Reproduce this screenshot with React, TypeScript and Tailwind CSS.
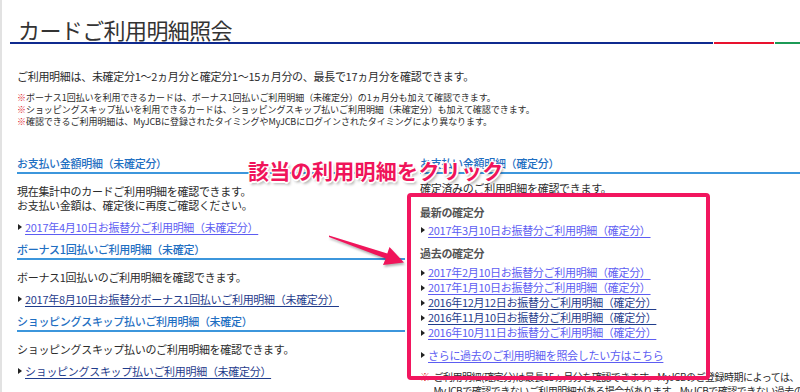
import React from 'react';

type Lnk = { text: string; dark?: boolean };

const notes = [
  'ボーナス1回払いを利用できるカードは、ボーナス1回払いご利用明細（未確定分）の1ヵ月分も加えて確認できます。',
  'ショッピングスキップ払いを利用できるカードは、ショッピングスキップ払いご利用明細（未確定分）も加えて確認できます。',
  '確認できるご利用明細は、MyJCBに登録されたタイミングやMyJCBにログインされたタイミングにより異なります。',
];

const pastLinks: Lnk[] = [
  { text: '2017年2月10日お振替分ご利用明細（確定分）' },
  { text: '2017年1月10日お振替分ご利用明細（確定分）' },
  { text: '2016年12月12日お振替分ご利用明細（確定分）', dark: true },
  { text: '2016年11月10日お振替分ご利用明細（確定分）', dark: true },
  { text: '2016年10月11日お振替分ご利用明細（確定分）' },
];

function Arrowed({ text, dark, lh = 'leading-[16px]' }: Lnk & { lh?: string }) {
  return (
    <div className={`flex items-center ${lh}`}>
      <span className="mr-[3px] ml-[1px] inline-block h-0 w-0 border-y-[3px] border-l-[4px] border-y-transparent border-l-[#222]" />
      <a
        href="#"
        className={`underline underline-offset-[2px] ${dark ? 'text-[#1f3c8c]' : 'text-[#5d5df2]'}`}
      >
        {text}
      </a>
    </div>
  );
}

function Heading({ children }: { children: React.ReactNode }) {
  return (
    <>
      <h2 className="leading-[16px] font-medium text-[#1f6fc2]">{children}</h2>
      <div className="mt-[1px] h-[2px] bg-[#3c96dc]" />
    </>
  );
}

function Section({ title, lines, link }: { title: string; lines: string[]; link: Lnk }) {
  return (
    <section>
      <Heading>{title}</Heading>
      <div className="mt-[10px] leading-[14px]">
        {lines.map((l) => (
          <p key={l}>{l}</p>
        ))}
      </div>
      <div className="mt-[7px]">
        <Arrowed {...link} />
      </div>
    </section>
  );
}

export default function App() {
  return (
    <div className="relative h-[392px] w-[800px] overflow-hidden border-l-2 border-[#e2e2e2] bg-white font-['Noto_Sans_CJK_JP',sans-serif] text-[11px] tracking-[-0.3px] text-[#2b2b2b]">
      <h1 className="pt-[16px] pl-[16px] text-[22px] leading-[26px] tracking-[-0.6px] text-[#333]">カードご利用明細照会</h1>
      <div className="ml-[8px] flex h-[2px] gap-[1px]">
        <div className="w-[703px] bg-[#0f2a8f]" />
        <div className="w-[60px] bg-[#e8122e]" />
        <div className="flex-1 bg-[#1c9a56]" />
      </div>

      <div className="pl-[15px]">
        <p className="mt-[24px] leading-[16px]">
          ご利用明細は、未確定分1～2ヵ月分と確定分1～15ヵ月分の、最長で17ヵ月分を確認できます。
        </p>
        <ul className="mt-[8px] text-[9px] leading-[12px] tracking-[-0.05px]">
          {notes.map((n) => (
            <li key={n}>
              <span className="text-[#e0262b]">※</span>
              {n}
            </li>
          ))}
        </ul>

        <div className="mt-[27px] flex">
          <div className="flex w-[388px] shrink-0 flex-col gap-[6px]">
            <Section
              title="お支払い金額明細（未確定分）"
              lines={['現在集計中のカードご利用明細を確認できます。', 'お支払い金額は、確定後に再度ご確認ください。']}
              link={{ text: '2017年4月10日お振替分ご利用明細（未確定分）' }}
            />
            <Section
              title="ボーナス1回払いご利用明細（未確定）"
              lines={['ボーナス1回払いのご利用明細を確認できます。']}
              link={{ text: '2017年8月10日お振替分ボーナス1回払いご利用明細（未確定分）', dark: true }}
            />
            <Section
              title="ショッピングスキップ払いご利用明細（未確定）"
              lines={['ショッピングスキップ払いのご利用明細を確認できます。']}
              link={{ text: 'ショッピングスキップ払いご利用明細（未確定分）', dark: true }}
            />
          </div>

          <div className="ml-[15px] w-[420px] shrink-0">
            <Heading>お支払い金額明細（確定分）</Heading>
            <p className="mt-[7px] leading-[14px]">確定済みのご利用明細を確認できます。</p>
            <h3 className="mt-[9px] font-bold leading-[16px] text-[#555]">最新の確定分</h3>
            <div className="mt-[2px]">
              <Arrowed text="2017年3月10日お振替分ご利用明細（確定分）" />
            </div>
            <h3 className="mt-[7px] font-bold leading-[16px] text-[#555]">過去の確定分</h3>
            <div className="mt-[4px]">
              {pastLinks.map((l) => (
                <Arrowed key={l.text} {...l} lh="leading-[15px]" />
              ))}
            </div>
            <div className="mt-[7px]">
              <Arrowed text="さらに過去のご利用明細を照会したい方はこちら" />
            </div>
            <div className="mt-[7px] flex text-[10px] leading-[14px] tracking-[-0.5px]">
              <span className="mr-[4px] text-[#e0262b]">※</span>
              <p className="whitespace-nowrap">
                ご利用明細(確定分)は最長15ヵ月分を確認できます。MyJCBのご登録時期によっては、
                <br />
                MyJCBで確認できないご利用明細がある場合があります。MyJCBで確認できない過去のご利用明細は
              </p>
            </div>
          </div>
        </div>
      </div>

      {/* annotation overlay */}
      <div className="pointer-events-none absolute top-[193px] left-[405px] h-[187px] w-[303px] rounded-[4px] border-4 border-[#f2165f]" />
      <p className="pointer-events-none absolute top-[157px] left-[246px] text-[21px] leading-[26px] font-bold tracking-[0.3px] text-[#f0145a] [text-shadow:1px_1px_0_#fff,-1px_-1px_0_#fff,1px_-1px_0_#fff,-1px_1px_0_#fff,0_2px_0_#fff,2px_0_0_#fff,2px_3px_3px_rgba(0,0,0,0.35)]">
        該当の利用明細をクリック
      </p>
      <svg
        className="pointer-events-none absolute top-[228px] left-[320px] drop-shadow-[1px_2px_1px_rgba(0,0,0,0.3)]"
        width="90"
        height="45"
        viewBox="320 228 90 45"
      >
        <polygon
          points="327,235.5 385.3,253.4 387.5,247 402,262.5 381,265 383.7,258.6 327,237"
          fill="#f0145a"
        />
      </svg>
    </div>
  );
}
